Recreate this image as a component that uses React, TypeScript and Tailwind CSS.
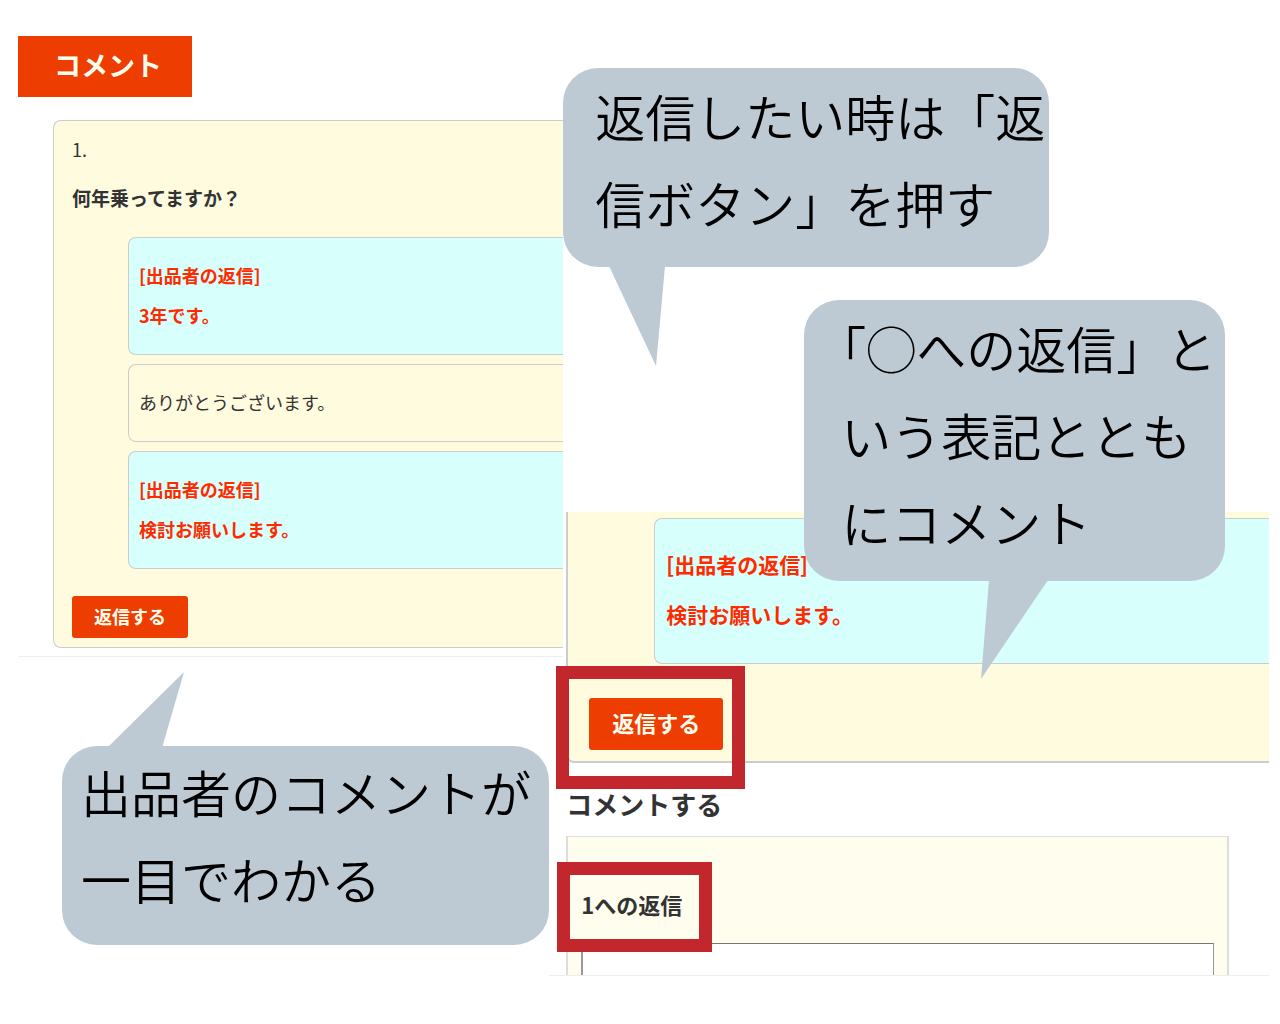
import type { ReactNode } from 'react';

type Tail = { points: string; viewBox: string; className: string };

function Callout({ lines, className, tail }: { lines: string[]; className: string; tail: Tail }) {
  return (
    <aside
      className={`absolute z-20 rounded-[35px] bg-[#bdcad3] text-[50px] leading-[87px] font-[350] whitespace-nowrap text-black [text-spacing-trim:trim-start] ${className}`}
    >
      <svg className={`absolute ${tail.className}`} viewBox={tail.viewBox} aria-hidden="true">
        <polygon points={tail.points} fill="#bdcad3" />
      </svg>
      {lines.map((line) => (
        <p key={line}>{line}</p>
      ))}
    </aside>
  );
}

function Reply({ seller = false, children }: { seller?: boolean; children: ReactNode }) {
  return (
    <li
      className={`rounded-l-lg border border-r-0 border-[#ccc] pt-[17px] pb-[19px] pl-[10px] ${
        seller ? 'bg-[#d7fffb] font-bold text-[#ff2a00]' : 'text-[#333]'
      }`}
    >
      {children}
    </li>
  );
}

export default function App() {
  return (
    <main
      lang="ja"
      className="grid min-h-screen grid-cols-[44%_1fr] overflow-x-hidden bg-white font-['Noto_Sans_CJK_JP',sans-serif] text-[#333]"
    >
      <section className="relative pt-9 pl-[18px] text-lg leading-10">
        <h1 className="w-fit bg-[#ed3d00] pt-2 pb-3 pr-[30px] pl-9 text-[27px] leading-[41px] font-bold text-[#fffded]">
          コメント
        </h1>
        <div className="border-b border-[#eee] pt-[23px] pb-2 pl-[35px]">
          <article className="rounded-l-lg border border-r-0 border-[#ccc] bg-[#fffbdf] pt-2 pb-[9px] pl-[18px]">
            <p>1.</p>
            <p className="mt-[9px] text-[19px] font-bold">何年乗ってますか？</p>
            <ul className="mt-[19px] ml-14 flex flex-col gap-[9px]">
              <Reply seller>
                <p>[出品者の返信]</p>
                <p>3年です。</p>
              </Reply>
              <Reply>
                <p>ありがとうございます。</p>
              </Reply>
              <Reply seller>
                <p>[出品者の返信]</p>
                <p>検討お願いします。</p>
              </Reply>
            </ul>
            <button
              type="button"
              className="mt-[27px] block rounded-[3px] bg-[#ed3d00] px-[22px] pt-[5px] pb-[7px] leading-[30px] font-bold text-[#fffded]"
            >
              返信する
            </button>
          </article>
        </div>
        <Callout
          className="top-[746px] left-[62px] w-[487px] pt-[2px] pb-[23px] pl-[19px]"
          tail={{
            className: '-top-[74px] left-[46px] h-[76px] w-[76px]',
            viewBox: '0 0 76 76',
            points: '76,0 0,75 0,76 54,76',
          }}
          lines={['出品者のコメントが', '一目でわかる']}
        />
      </section>

      <section className="relative pt-[512px] pr-[11px] pl-[3px] text-[22px] leading-[50px]">
        <article className="rounded-bl-lg border-b-2 border-l-2 border-[#ccc] bg-[#fffbdf] pt-[6px] pb-[11px] pl-[21px]">
          <div className="ml-[65px] rounded-l-lg border border-r-0 border-[#ccc] bg-[#d7fffb] pt-5 pb-6 pl-[11px] text-[21px] font-bold text-[#ff2a00]">
            <p>[出品者の返信]</p>
            <p>検討お願いします。</p>
          </div>
          <div className="relative mt-[34px] w-fit">
            <button
              type="button"
              className="block rounded-[3px] bg-[#ed3d00] px-[23px] pt-1 pb-2 leading-10 font-bold text-[#fffded]"
            >
              返信する
            </button>
            <span className="pointer-events-none absolute -top-8 -right-[22px] -bottom-[39px] -left-[33px] border-[13px] border-[#c1272d]" />
          </div>
        </article>

        <h2 className="mt-[21px] text-[26px] leading-10 font-bold">コメントする</h2>
        <div className="-ml-[17px] border-b border-[#eee] pt-3 pl-[17px]">
          <form className="mr-10 border-x-2 border-t border-[#ddd] bg-[#fffded] px-[13px] pt-[42px]">
            <div className="relative w-fit">
              <label htmlFor="reply" className="block font-bold">
                1への返信
              </label>
              <span className="pointer-events-none absolute -top-[17px] -right-[30px] -bottom-[23px] -left-6 border-[13px] border-[#c1272d]" />
            </div>
            <textarea
              id="reply"
              className="mt-[14px] block h-8 w-full resize-none border-t border-r border-l-2 border-[#999] border-t-[#777] bg-white px-2 text-base outline-none"
            />
          </form>
        </div>

        <Callout
          className="top-[68px] left-0 w-[486px] pt-1 pb-[21px] pl-8"
          tail={{
            className: 'top-[198px] left-[46px] h-[100px] w-[56px]',
            viewBox: '0 0 56 100',
            points: '0,0 56,0 47,100',
          }}
          lines={['返信したい時は「返', '信ボタン」を押す']}
        />
        <Callout
          className="top-[300px] left-[241px] w-[421px] pt-1 pb-4 pl-[37px]"
          tail={{
            className: 'top-[280px] left-[177px] h-[99px] w-[67px]',
            viewBox: '0 0 67 99',
            points: '8,0 67,0 0,99',
          }}
          lines={['「◯への返信」と', 'いう表記ととも', 'にコメント']}
        />
      </section>
    </main>
  );
}
